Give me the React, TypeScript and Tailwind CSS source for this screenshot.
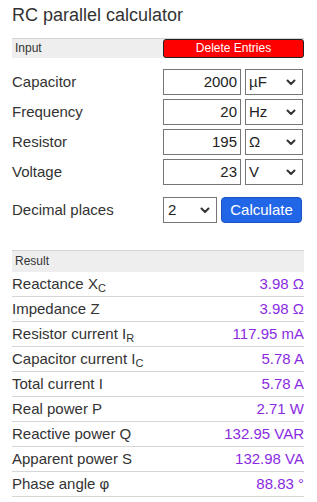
import React from "react";

const Chevron = () => (
  <svg width="10" height="7" viewBox="0 0 10 7" className="shrink-0">
    <path d="M1.5 1.5 L5 5 L8.5 1.5" fill="none" stroke="#333" strokeWidth="2" strokeLinecap="round" strokeLinejoin="round" />
  </svg>
);

const inputRows = [
  { label: "Capacitor", value: "2000", unit: "µF" },
  { label: "Frequency", value: "20", unit: "Hz" },
  { label: "Resistor", value: "195", unit: "Ω" },
  { label: "Voltage", value: "23", unit: "V" },
];

const results: { label: React.ReactNode; value: string }[] = [
  { label: <>Reactance X<sub className="text-[11px]">C</sub></>, value: "3.98 Ω" },
  { label: "Impedance Z", value: "3.98 Ω" },
  { label: <>Resistor current I<sub className="text-[11px]">R</sub></>, value: "117.95 mA" },
  { label: <>Capacitor current I<sub className="text-[11px]">C</sub></>, value: "5.78 A" },
  { label: "Total current I", value: "5.78 A" },
  { label: "Real power P", value: "2.71 W" },
  { label: "Reactive power Q", value: "132.95 VAR" },
  { label: "Apparent power S", value: "132.98 VA" },
  { label: "Phase angle φ", value: "88.83 °" },
];

export default function App() {
  return (
    <div
      className="w-[317px] h-[502px] bg-white pl-[12px] pr-[13px] text-[#333] overflow-hidden"
      style={{ fontFamily: '"Liberation Sans", Arial, sans-serif' }}
    >
      <h1 className="text-[18px] leading-[21px] pt-[5px] text-[#333]">RC parallel calculator</h1>

      <div className="mt-[12px] h-[20px] bg-[#eeeeee] border-t border-[#d4d4d4] flex items-stretch">
        <div className="w-[151px] pl-[3px] text-[12px] leading-[19px]">Input</div>
        <div className="w-[141px] h-[19px] bg-[#ff0000] border border-[#222] rounded-[3px] text-white text-[12px] leading-[17px] text-center">
          Delete Entries
        </div>
      </div>

      <div className="mt-[11px] flex flex-col gap-[4px]">
        {inputRows.map((r) => (
          <div key={r.label} className="flex items-center h-[26px]">
            <div className="w-[151px] text-[15px]">{r.label}</div>
            <div className="w-[78px] h-[26px] border border-[#767676] text-[15px] text-right pr-[3px] leading-[24px] text-[#222]">
              {r.value}
            </div>
            <div className="ml-[4px] w-[58px] h-[26px] border border-[#767676] flex items-center justify-between pl-[3px] pr-[6px] text-[15px] text-[#222]">
              <span>{r.unit}</span>
              <Chevron />
            </div>
          </div>
        ))}
      </div>

      <div className="mt-[12px] flex items-center h-[26px]">
        <div className="w-[151px] text-[15px]">Decimal places</div>
        <div className="w-[54px] h-[26px] border border-[#767676] flex items-center justify-between pl-[4px] pr-[6px] text-[15px] text-[#222]">
          <span>2</span>
          <Chevron />
        </div>
        <div className="ml-[4px] w-[81px] h-[26px] bg-[#2266e8] border border-[#1b52c4] rounded-[4px] text-white text-[15px] leading-[24px] text-center">
          Calculate
        </div>
      </div>

      <div className="mt-[27px] h-[22px] bg-[#eeeeee] border-t border-[#d4d4d4] pl-[3px] text-[12px] leading-[20px]">
        Result
      </div>

      <div className="flex flex-col">
        {results.map((r, i) => (
          <div key={i} className="h-[25px] border-b border-[#d6d6d6] flex items-center justify-between text-[15px]">
            <span>{r.label}</span>
            <span className="text-[#8a2be2]">{r.value}</span>
          </div>
        ))}
      </div>
    </div>
  );
}
